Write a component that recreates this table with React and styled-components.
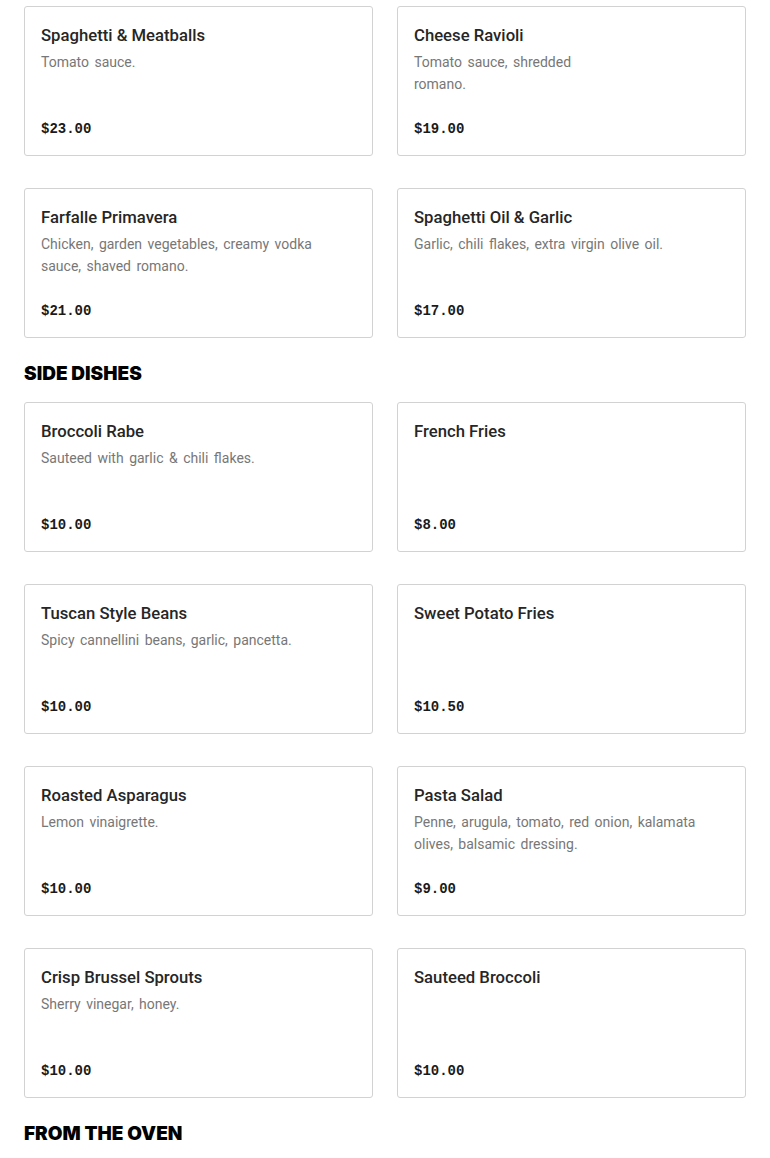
import React from 'react';
import styled, { createGlobalStyle } from 'styled-components';

const GlobalStyle = createGlobalStyle`
  * { box-sizing: border-box; }
  body {
    margin: 0;
    background: #fff;
    font-family: Roboto, "Liberation Sans", sans-serif;
  }
`;

const pasta = [
  { name: 'Spaghetti & Meatballs', desc: 'Tomato sauce.', price: '$23.00' },
  { name: 'Cheese Ravioli', desc: 'Tomato sauce, shredded romano.', price: '$19.00', narrow: true },
  { name: 'Farfalle Primavera', desc: 'Chicken, garden vegetables, creamy vodka sauce, shaved romano.', price: '$21.00' },
  { name: 'Spaghetti Oil & Garlic', desc: 'Garlic, chili flakes, extra virgin olive oil.', price: '$17.00' },
];

const sides = [
  { name: 'Broccoli Rabe', desc: 'Sauteed with garlic & chili flakes.', price: '$10.00' },
  { name: 'French Fries', desc: '', price: '$8.00' },
  { name: 'Tuscan Style Beans', desc: 'Spicy cannellini beans, garlic, pancetta.', price: '$10.00' },
  { name: 'Sweet Potato Fries', desc: '', price: '$10.50' },
  { name: 'Roasted Asparagus', desc: 'Lemon vinaigrette.', price: '$10.00' },
  { name: 'Pasta Salad', desc: 'Penne, arugula, tomato, red onion, kalamata olives, balsamic dressing.', price: '$9.00' },
  { name: 'Crisp Brussel Sprouts', desc: 'Sherry vinegar, honey.', price: '$10.00' },
  { name: 'Sauteed Broccoli', desc: '', price: '$10.00' },
];

const MenuCard = ({ item }) => (
  <Card>
    <Title>{item.name}</Title>
    {item.desc && <Desc $narrow={item.narrow}>{item.desc}</Desc>}
    <Price>{item.price}</Price>
  </Card>
);

const App = () => (
  <>
    <GlobalStyle />
    <Page>
      <Grid>
        {pasta.map((item) => <MenuCard key={item.name} item={item} />)}
      </Grid>
      <SectionTitle>SIDE DISHES</SectionTitle>
      <Grid>
        {sides.map((item) => <MenuCard key={item.name} item={item} />)}
      </Grid>
      <SectionTitle>FROM THE OVEN</SectionTitle>
    </Page>
  </>
);

const Page = styled.div`
  padding: 6px 24px 0;
`;

const Grid = styled.div`
  display: grid;
  grid-template-columns: 1fr 1fr;
  column-gap: 24px;
  row-gap: 32px;
`;

const Card = styled.div`
  display: flex;
  flex-direction: column;
  min-height: 150px;
  padding: 17px 16px 15px;
  border: 1px solid #d2d2d2;
  border-radius: 3px;
  background: #fff;
`;

const Title = styled.div`
  font-family: Roboto, "Liberation Sans", sans-serif;
  font-size: 16.7px;
  line-height: 24px;
  font-weight: 500;
  color: #262626;
`;

const Desc = styled.div`
  margin-top: 3px;
  max-width: ${(p) => (p.$narrow ? '200px' : 'none')};
  font-family: Roboto, "Liberation Sans", sans-serif;
  font-size: 14px;
  line-height: 22px;
  word-spacing: 2px;
  color: #777;
`;

const Price = styled.div`
  margin-top: auto;
  font-family: "Liberation Mono", monospace;
  font-size: 14px;
  line-height: 22px;
  font-weight: 700;
  color: #1a1a1a;
`;

const SectionTitle = styled.h2`
  margin: 25px 0 17px;
  font-family: Inter, "Liberation Sans", sans-serif;
  font-size: 19px;
  line-height: 22px;
  font-weight: 900;
  color: #000;
`;

export default App;
